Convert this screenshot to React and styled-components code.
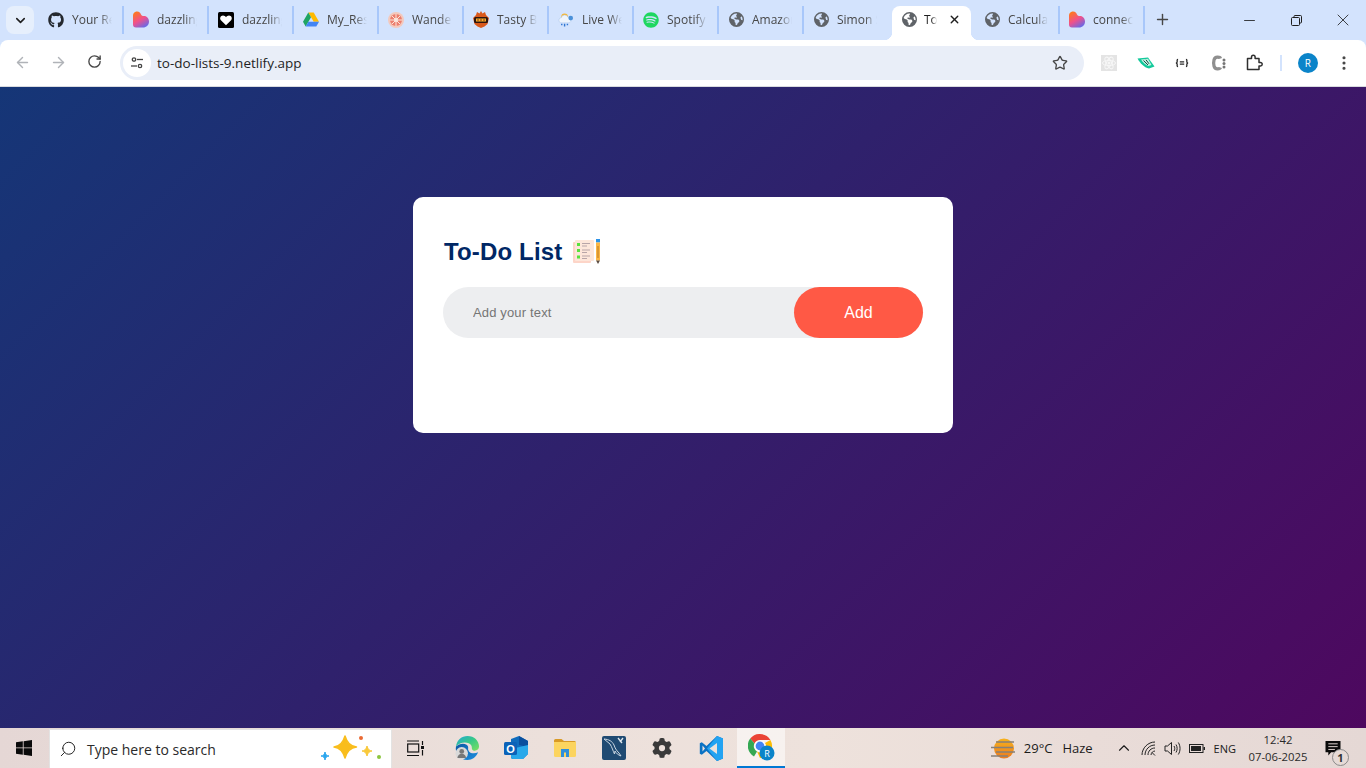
import React from 'react';
import styled, { createGlobalStyle } from 'styled-components';
import { ArrowLeft, ArrowRight, RotateCw, Star, Plus, X, Minus, ChevronDown, EllipsisVertical, ChevronUp, Search as SearchGlyph } from 'lucide-react';
import { FaGithub, FaSpotify, FaEarthAmericas, FaGear } from 'react-icons/fa6';

const Global = createGlobalStyle`
  html, body { margin: 0; padding: 0; height: 100%; overflow: hidden; }
  * { box-sizing: border-box; }
`;

const Shell = styled.div`
  width: 1366px; height: 768px; display: flex; flex-direction: column;
  font-family: "Open Sans", "Noto Sans", sans-serif; overflow: hidden;
`;

/* browser chrome */
const TabStrip = styled.div`
  height: 40px; flex: none; background: #d3e3fd; display: flex; align-items: flex-start;
  padding-left: 6px; position: relative;
`;
const TabSearch = styled.div`
  width: 28px; height: 28px; margin-top: 6px; margin-right: 5px; border-radius: 8px; background: #e6effc;
  display: flex; align-items: center; justify-content: center; color: #1f1f1f; flex: none;
`;
const Tab = styled.div`
  width: 85px; height: 28px; margin-top: 6px; display: flex; align-items: center; padding-left: 9px;
  flex: none; position: relative;
  border-right: 2px solid ${p => (p.$noSep ? 'transparent' : '#a8c7fa')};
  background-clip: padding-box;
`;
const TabTitle = styled.span`
  margin-left: 8px; font-size: 12px; line-height: 16px; margin-top: -1px; color: #474747; white-space: nowrap; overflow: hidden; width: 40px;
  -webkit-mask-image: linear-gradient(90deg, #000 70%, transparent 100%);
  mask-image: linear-gradient(90deg, #000 70%, transparent 100%);
`;
const FavSlot = styled.span`
  width: 16px; height: 16px; flex: none; display: flex; align-items: center; justify-content: center;
  margin-top: -1px;
  color: ${p => p.$color || '#5f6368'};
`;
const ActiveTab = styled.div`
  width: 79px; height: 34px; margin: 6px 4px 0 3px; padding: 0 0 6px 9px; display: flex; align-items: center;
  background: #fff; border-radius: 8px 8px 0 0; flex: none; position: relative;
  &::before, &::after {
    content: ""; position: absolute; bottom: 0; width: 8px; height: 8px;
  }
  &::before { left: -8px; background: radial-gradient(circle at 0 0, transparent 8px, #fff 8.5px); }
  &::after { right: -8px; background: radial-gradient(circle at 100% 0, transparent 8px, #fff 8.5px); }
`;
const ActiveTitle = styled.span`
  margin-left: 7px; font-size: 12px; line-height: 16px; margin-top: -1px; color: #1f1f1f; width: 13px; overflow: hidden; white-space: nowrap;
  -webkit-mask-image: linear-gradient(90deg, #000 60%, transparent 100%);
  mask-image: linear-gradient(90deg, #000 60%, transparent 100%);
`;
const TabClose = styled.span`
  margin-left: 11px; margin-top: -1px; display: flex; color: #1f1f1f;
`;
const NewTab = styled.span`
  margin: 5px 0 0 8px; width: 18px; height: 28px; display: flex; align-items: center; justify-content: center; color: #474747;
`;
const WindowControls = styled.div`
  margin-left: auto; display: flex; height: 40px;
`;
const WinButton = styled.span`
  width: 46.5px; display: flex; align-items: center; justify-content: center; color: #1f1f1f;
`;
const Toolbar = styled.div`
  height: 47px; flex: none; background: #fff; display: flex; align-items: center; padding: 0 0 1px 0;
  border-bottom: 1px solid #d9dbe0; border-radius: 8px 8px 0 0; margin-top: 0; position: relative;
`;
const ToolbarBack = styled.div`
  height: 47px; flex: none; background: #d3e3fd;
`;
const NavButton = styled.span`
  width: 36px; display: flex; justify-content: center; color: ${p => p.$color};
  flex: none;
`;
const NavGroup = styled.div`
  display: flex; padding-left: 4px; width: 120px; flex: none;
`;
const Omnibox = styled.div`
  width: 964px; height: 34px; border-radius: 17px; background: #e9eef8; display: flex; align-items: center;
  padding: 0 16px 0 3px; flex: none;
`;
const SiteInfo = styled.span`
  width: 28px; height: 28px; border-radius: 50%; background: #fff; display: flex; align-items: center; justify-content: center; flex: none;
`;
const Url = styled.span`
  margin-left: 6px; font-size: 13.5px; color: #1f1f1f;
`;
const OmniStar = styled.span`
  margin-left: auto; display: flex; color: #474747;
`;
const ExtensionTray = styled.div`
  display: flex; align-items: center; margin-left: 7px; flex: 1;
`;
const ExtSlot = styled.span`
  width: 36.4px; display: flex; justify-content: center; flex: none;
`;
const ToolbarDivider = styled.span`
  width: 2px; height: 16px; background: #d3e3fd; margin: 0 16px 0 7px; flex: none;
`;
const Avatar = styled.span`
  width: 20px; height: 20px; border-radius: 50%; background: #0b84c9; color: #fff; font-size: 10px;
  display: flex; align-items: center; justify-content: center; flex: none;
`;
const Kebab = styled.span`
  margin-left: 17px; display: flex; color: #474747;
`;

/* page */
const Page = styled.main`
  flex: 1; background: linear-gradient(135deg, #153677, #4e085f); display: flex; justify-content: center; align-items: flex-start;
  padding-top: 110px;
`;
const Card = styled.section`
  width: 540px; height: 236px; background: #fff; border-radius: 10px; padding: 40px 30px 70px;
  font-family: "Liberation Sans", Arial, sans-serif;
`;
const Heading = styled.h2`
  margin: 0 0 20px; color: #002765; font-size: 24px; font-weight: 700; display: flex; align-items: center; height: 30px;
  letter-spacing: 0.15px; padding-left: 1px;
`;
const HeadingIcon = styled.svg`
  width: 28px; height: 25px; margin: -1px 0 0 11px; flex: none;
`;
const InputRow = styled.div`
  height: 51px; display: flex; align-items: center; justify-content: space-between; background: #edeef0; border-radius: 30px;
`;
const TaskInput = styled.input`
  flex: 1; border: 0; outline: 0; background: transparent; padding: 10px 10px 10px 30px; font: 13px "Liberation Sans", Arial, sans-serif;
  letter-spacing: 0.15px; min-width: 0;
  &::placeholder { color: #757575; opacity: 1; }
`;
const AddButton = styled.button`
  width: 129px; height: 51px; border: 0; border-radius: 40px; background: #ff5945; color: #fff; font: 16px "Liberation Sans", Arial, sans-serif; flex: none;
`;

/* taskbar */
const Taskbar = styled.footer`
  height: 40px; flex: none; display: flex; align-items: stretch;
  background: linear-gradient(90deg, #e5d7d5 0%, #ece0db 40%, #eee2dc 60%, #e9dcd8 80%, #e5d8d5 100%);
`;
const StartButton = styled.span`
  width: 48px; margin-right: 1px; display: flex; align-items: center; justify-content: center; flex: none;
`;
const SearchBox = styled.div`
  width: 343px; background: #fff; margin-top: 1px; display: flex; align-items: center; padding: 0 8px 0 9px; flex: none;
  border: 1px solid #e3e3e3; border-bottom: 0; position: relative;
`;
const SearchText = styled.span`
  margin-left: 10px; font-size: 14px; color: #2a2a2a;
`;
const SparkIcon = styled.svg`
  margin-left: auto; flex: none;
`;
const TaskSlot = styled.span`
  width: 48px; margin-left: ${p => p.$offset}px; display: flex; align-items: center; justify-content: center; flex: none;
  background: ${p => (p.$active ? 'rgba(255,255,255,.55)' : 'transparent')};
  border-bottom: ${p => (p.$active ? '2px solid #0078d4' : '0')};
`;
const Tray = styled.div`
  margin-left: auto; display: flex; align-items: center; color: #1b1b1b; flex: none;
`;
const TrayText = styled.span`
  font-size: ${p => p.$size || 13}px; margin-left: ${p => p.$left || 0}px; white-space: nowrap;
`;
const TrayIcon = styled.span`
  display: flex; margin-left: ${p => p.$left}px; flex: none;
`;
const Clock = styled.span`
  width: 72px; margin-left: 6px; text-align: center; font-size: 11.3px; line-height: 17px; color: #2a2a2a; flex: none;
`;
const Notify = styled.span`
  margin: 0 25px 0 11px; position: relative; display: flex; flex: none;
`;
const NotifyBadge = styled.span`
  position: absolute; right: -8px; bottom: -10px; width: 17px; height: 17px; border-radius: 50%; border: 1px solid #8a8a8a;
  background: #e6dad6; font-size: 11px; font-weight: 700; display: flex; align-items: center; justify-content: center; color: #333;
`;

const Globe = () => <FaEarthAmericas size={15} />;

const DazzleHeart = () => (
  <svg width="17" height="17" viewBox="0 0 16 16">
    <defs>
      <linearGradient id="hg" x1="0.2" y1="0" x2="0.8" y2="1">
        <stop offset="0" stopColor="#ff7a1a" />
        <stop offset="0.5" stopColor="#f0508c" />
        <stop offset="1" stopColor="#5a6cf0" />
      </linearGradient>
    </defs>
    <path d="M0 4.500C0 1 2.500 0 4 0c2.500 0 3.500 1.500 4 3 .6 1 1.500 1.500 3 1.500 3 0 5 2.500 5 5.500 0 3.500-2.500 6-6 6H3c-2 0-3-1.200-3-3Z" fill="url(#hg)" />
  </svg>
);
const BlackHeart = () => (
  <svg width="16" height="16" viewBox="0 0 16 16">
    <rect width="16" height="16" rx="1.500" fill="#000" />
    <path d="M8 13.200 2.900 8.200C1.400 6.500 2.400 3.400 5 3.400c1.300 0 2.400.7 3 1.800.6-1.100 1.700-1.800 3-1.800 2.600 0 3.600 3.100 2.100 4.800Z" fill="#fff" />
  </svg>
);
const Drive = () => (
  <svg width="16" height="15" viewBox="0 0 16 14">
    <path d="M5.300 0h5.400l5.300 9.200h-5.300Z" fill="#ffba00" />
    <path d="M5.300 0 0 9.200 2.700 14 8 4.700Z" fill="#1fa463" />
    <path d="M5.300 9.200H16L13.300 14H2.700Z" fill="#4285f4" />
  </svg>
);
const Wander = () => (
  <svg width="16" height="16" viewBox="0 0 16 16">
    <circle cx="8" cy="8" r="8" fill="#f3c9bd" />
    <circle cx="8" cy="8" r="6" fill="#ec7f6e" />
    <path d="M2 8h12M8 2v12M4 4l8 8M12 4l-8 8" stroke="#fbe6dc" strokeWidth="1" />
    <circle cx="8" cy="8" r="2" fill="#fbe6dc" />
  </svg>
);
const Tasty = () => (
  <svg width="16" height="17" viewBox="0 0 16 17">
    <path d="M8 0l1.500 2.500L12 1l1 3 3 3-1.500 6-3 2.500L8 17l-3.500-1.500-3-2.500L0 7l3-3 1-3 2.500 1.500Z" fill="#d9591c" />
    <rect x="1" y="6" width="14" height="6" rx="1.500" fill="#2e1510" />
    <rect x="3" y="7.500" width="10" height="3" fill="#f7b32b" />
    <path d="M5 8v2M8 8v2M11 8v2" stroke="#8a2f12" strokeWidth="1" />
  </svg>
);
const Weather = () => (
  <svg width="17" height="16" viewBox="0 0 17 16">
    <circle cx="7" cy="4.500" r="3.500" fill="#f7b733" />
    <path d="M3 11a2.800 2.800 0 0 1 .5-5.500 3.700 3.700 0 0 1 7-.5 3 3 0 0 1 1 6Z" fill="#eef4fc" stroke="#a9c6ea" strokeWidth=".5" />
    <circle cx="13.500" cy="6" r="2.500" fill="#4a90d9" />
    <path d="M4 12v1.500M7 12v3M10 12v1.500" stroke="#2f76d2" strokeWidth="1.500" />
  </svg>
);
const tabs = [
  ['Your Repositories', <FavSlot $color="#24292f"><FaGithub size={16} /></FavSlot>],
  ['dazzling-site', <FavSlot><DazzleHeart /></FavSlot>],
  ['dazzling-app', <FavSlot><BlackHeart /></FavSlot>],
  ['My_Resume', <FavSlot><Drive /></FavSlot>],
  ['Wanderlust', <FavSlot><Wander /></FavSlot>],
  ['Tasty Bites', <FavSlot><Tasty /></FavSlot>],
  ['Live Weather', <FavSlot><Weather /></FavSlot>],
  ['Spotify', <FavSlot $color="#1ed760"><FaSpotify size={16} /></FavSlot>],
  ['Amazon', <FavSlot><Globe /></FavSlot>],
  ['Simon Says', <FavSlot><Globe /></FavSlot>],
];

const TuneIcon = () => (
  <svg width="16" height="16" viewBox="0 0 16 16" fill="none" stroke="#444" strokeWidth="1.300">
    <circle cx="5" cy="4.500" r="1.700" /><path d="M8 4.500h6" />
    <circle cx="11" cy="11" r="1.700" /><path d="M2 11h6" />
  </svg>
);
const ReactExt = () => (
  <svg width="16" height="16" viewBox="0 0 16 16">
    <rect width="16" height="16" fill="#e4e4e4" />
    <g fill="none" stroke="#f7f7f7" strokeWidth="1">
      <ellipse cx="8" cy="8" rx="6.500" ry="2.600" />
      <ellipse cx="8" cy="8" rx="6.500" ry="2.600" transform="rotate(60 8 8)" />
      <ellipse cx="8" cy="8" rx="6.500" ry="2.600" transform="rotate(120 8 8)" />
    </g>
    <circle cx="8" cy="8" r="1.500" fill="#f7f7f7" />
  </svg>
);
const SaucerExt = () => (
  <svg width="18" height="12" viewBox="0 0 18 12">
    <path d="M.5 1.500 11 .5 17.500 9.500 12 11.500C7 10.500 3 6 .5 1.500Z" fill="#12c99b" />
    <path d="M4 2.500l7-.8 3.500 6.300-3 1C8.500 8 6 5.500 4 2.500Z" fill="#bff3e2" />
    <path d="M6.500 3.500 11 8M9 2.800l3 4" stroke="#1a4a45" strokeWidth="1" />
  </svg>
);
const BraceExt = () => (
  <svg width="14" height="10" viewBox="0 0 16 10" fill="none" stroke="#2b2b2b" strokeWidth="1.500">
    <path d="M3.500 1C2 1 2.500 2.500 2.500 3.500S2 5 1 5c1 0 1.500.5 1.500 1.500S2 9 3.500 9" />
    <path d="M12.500 1c1.500 0 1 1.500 1 2.500s.5 1.500 1.500 1.500c-1 0-1.500.5-1.500 1.500s.5 2.500-1 2.500" />
    <path d="M5.500 3.800h5M5.500 6.200h5" />
  </svg>
);
const CExt = () => (
  <svg width="15" height="16" viewBox="0 0 15 16">
    <path d="M9.500 3.500C9 2 4 1 3 5c-.5 2-.5 4 0 6 1 4 6 3 6.500 1.500" fill="none" stroke="#8f8f8f" strokeWidth="3.200" />
    <circle cx="13" cy="5" r="1.500" fill="#757575" /><circle cx="13" cy="8.500" r="1.500" fill="#757575" /><circle cx="13" cy="12" r="1.500" fill="#757575" />
  </svg>
);
const PuzzleExt = () => (
  <svg width="17" height="17" viewBox="0 0 17 17" fill="none" stroke="#2f2f2f" strokeWidth="1.500" strokeLinejoin="round">
    <path d="M1.500 4.500h4V3a1.800 1.800 0 0 1 3.600 0v1.500H13v4h1.500a1.700 1.700 0 0 1 0 3.400H13v3.600H1.500Z" />
  </svg>
);
const WindowsLogo = () => (
  <svg width="16" height="16" viewBox="0 0 16 16" fill="#0a0a0a">
    <path d="M0 2.300 6.800 1.300V7.500H0ZM7.600 1.200 16 0V7.500H7.600ZM0 8.300H6.800V14.700L0 13.700ZM7.600 8.300H16V16L7.600 14.800Z" />
  </svg>
);
const Sparkles = () => (
  <SparkIcon width="64" height="30" viewBox="0 0 64 30">
    <path d="M2 22c2.500-.2 3.300-1 4-4 .7 3 1.500 3.800 4 4-2.500.3-3.300 1.200-4 4-.7-2.800-1.500-3.700-4-4Z" fill="#2aa6ee" stroke="#2aa6ee" strokeWidth="1" />
    <path d="M15 13c6-.5 9-4 11-11 2 7 5 10.500 11.500 11-6.500.7-9.500 4-11.500 11-2-7-5-10.300-11-11Z" fill="#f9bd1c" stroke="#f9bd1c" strokeWidth="1.500" strokeLinejoin="round" />
    <path d="M43 17c2.500-.2 4-1.500 5-5 1 3.500 2.500 4.800 5 5-2.500.3-4 1.500-5 5-1-3.500-2.500-4.700-5-5Z" fill="#f9c93a" stroke="#f9c93a" />
    <circle cx="42" cy="4" r="2" fill="#ea6a33" />
    <circle cx="60" cy="23" r="2" fill="#8cc63f" />
  </SparkIcon>
);
const TaskView = () => (
  <svg width="18" height="17" viewBox="0 0 18 17" fill="none" stroke="#111" strokeWidth="1.200">
    <rect x=".7" y="4" width="11" height="8" />
    <path d="M0 1h12M0 15.500h12M15.500 1v4M15.500 10v5.500" />
    <rect x="14" y="6" width="3" height="3" fill="#111" stroke="none" />
  </svg>
);
const Edge = () => (
  <svg width="25" height="25" viewBox="0 0 26 26">
    <defs>
      <linearGradient id="eg" x1="0" y1="0" x2="1" y2="1">
        <stop offset="0" stopColor="#1fa8d8" /><stop offset=".5" stopColor="#39c985" /><stop offset="1" stopColor="#7fe05f" />
      </linearGradient>
      <linearGradient id="eb" x1="0" y1="0" x2="1" y2="1">
        <stop offset="0" stopColor="#0c59a4" /><stop offset="1" stopColor="#1d8fe0" />
      </linearGradient>
    </defs>
    <path d="M1 11C2 4 7 0 13 0c7 0 12 5 12 11 0 3-3 5-6 4-2-.5-1-3-2-5C15 6 6 5 1 11Z" fill="url(#eg)" />
    <path d="M1 11c3-3 8-4 11-2 3 2 1 4 2 6 1 3 6 4 10 2-2 5-6 8-11 8-4 0-8-2-10-5C1 17 .5 14 1 11Z" fill="url(#eb)" />
    <circle cx="7" cy="18" r="6.500" fill="#d9d9d9" />
    <circle cx="7" cy="16" r="2.500" fill="#777" />
    <path d="M2.500 23a4.500 4.500 0 0 1 9 0Z" fill="#777" />
  </svg>
);
const Outlook = () => (
  <svg width="25" height="24" viewBox="0 0 25 24">
    <path d="M7 3 15 0l9 5v13l-5 5H9a2 2 0 0 1-2-2Z" fill="#0f6cbd" />
    <path d="M15 0l9 5v6l-9-2Z" fill="#0a4f9e" />
    <path d="M7 13l17-4v9l-5 5H9a2 2 0 0 1-2-2Z" fill="#28a8ea" />
    <rect x="0" y="6" width="13" height="13" rx="1.500" fill="#0b62b8" />
    <text x="6.500" y="16.500" textAnchor="middle" fontSize="11" fontWeight="700" fill="#fff" fontFamily="Liberation Sans">O</text>
  </svg>
);
const Explorer = () => (
  <svg width="22" height="18" viewBox="0 0 22 18">
    <path d="M0 1.500A1.500 1.500 0 0 1 1.500 0h6L10 2h10.500A1.500 1.500 0 0 1 22 3.500V6H0Z" fill="#d99a26" />
    <path d="M0 3h22v13.500a1.500 1.500 0 0 1-1.500 1.500h-19A1.500 1.500 0 0 1 0 16.500Z" fill="#fcd45f" />
    <path d="M7 10h8v8h-3v-4.500h-2V18H7Z" fill="#2f8fdb" />
  </svg>
);
const MySql = () => (
  <svg width="24" height="24" viewBox="0 0 24 24">
    <rect width="24" height="24" rx="2" fill="#1f4a72" />
    <path d="M2 3c5 .5 8 2 10 6 1 3 2 5 5 8l2 3c-3-1-5-3-6-5l-.5 3C11 15 10 11 8 8 6 6 4 5 2 3Z" fill="none" stroke="#c9d6e2" strokeWidth="1" />
    <path d="M16 2l4 5M21 2l-3 4" stroke="#dfe8ef" strokeWidth="1.300" />
  </svg>
);
const VsCode = () => (
  <svg width="25" height="25" viewBox="0 0 25 25">
    <path d="M18 0 7.500 10 2.800 6.300.8 7.300v10.400l2 1 4.700-3.700L18 25l6-2.600V2.600Z" fill="#0a72c4" />
    <path d="M18 0l6 2.600v19.800L18 25 8 12.500Z" fill="#23a3f2" />
    <path d="M18 7 10.500 12.500 18 18Z" fill="#eee2dc" />
    <path d="M3.500 9.400 6 12.500l-2.500 3.100Z" fill="#eee2dc" />
  </svg>
);
const ChromeBadge = () => (
  <svg width="27" height="27" viewBox="0 0 27 27">
    <path d="M12 0a12 12 0 0 1 10.400 6H12a6 6 0 0 0-5.500 3.500L2.200 4.600A12 12 0 0 1 12 0Z" fill="#ea4335" />
    <path d="M2.200 4.600 6.500 9.500A6 6 0 0 0 9 17.500L6 22.400A12 12 0 0 1 2.200 4.600Z" fill="#34a853" />
    <path d="M22.400 6A12 12 0 0 1 12 24l-3-6.500A6 6 0 0 0 17 9Z" fill="#fbbc04" />
    <circle cx="12" cy="12" r="5" fill="#4285f4" stroke="#fff" strokeWidth="1.200" />
    <circle cx="19" cy="19" r="7.500" fill="#0b84c9" />
    <text x="19" y="22.500" textAnchor="middle" fontSize="9" fill="#fff" fontFamily="Open Sans">R</text>
  </svg>
);
const Haze = () => (
  <svg width="26" height="21" viewBox="0 0 26 21">
    <defs>
      <linearGradient id="hz" x1="0" y1="0" x2="0" y2="1">
        <stop offset="0" stopColor="#f7b21c" /><stop offset="1" stopColor="#ec7a1f" />
      </linearGradient>
    </defs>
    <circle cx="13" cy="10.500" r="10" fill="url(#hz)" />
    <path d="M5 4h18M0 9.500h22M5 14h19M0 18h17" stroke="#85807a" strokeWidth="1.600" />
  </svg>
);
const Wifi = () => (
  <svg width="15" height="15" viewBox="0 0 15 15" fill="none" stroke="#222" strokeWidth="1">
    <path d="M1 14C1 7 7 1 14 1M4 14c0-5.500 4.500-10 10-10M7 14c0-4 3-7 7-7" />
    <path d="M10 14c0-2 2-4 4-4" />
    <path d="M11 11.500l3 3" stroke="#222" strokeWidth="1" />
  </svg>
);
const Speaker = () => (
  <svg width="17" height="15" viewBox="0 0 17 15" fill="none" stroke="#222" strokeWidth="1">
    <path d="M1 5h2.500L7.500 1.500v12L3.500 10H1Z" />
    <path d="M10 5c1 1.500 1 3.500 0 5M12 3.500c1.500 2.500 1.500 5.500 0 8M14.300 1.500c2.300 3.500 2.300 8.500 0 12" />
  </svg>
);
const Battery = () => (
  <svg width="16" height="9" viewBox="0 0 16 9">
    <rect x=".5" y=".5" width="13.500" height="8" fill="none" stroke="#222" />
    <rect x="2" y="2" width="10" height="5" fill="#222" />
    <rect x="14.500" y="3" width="1.500" height="3" fill="#222" />
  </svg>
);
const ChatBubble = () => (
  <svg width="16" height="15" viewBox="0 0 16 16">
    <path d="M0 0h16v12H6l-3 3.500V12H0Z" fill="#0a0a0a" />
    <path d="M3 3h10M3 6h10M3 9h7" stroke="#e6dad6" strokeWidth="1" />
  </svg>
);
const NotebookEmoji = () => (
  <HeadingIcon viewBox="0 0 28 25">
    <rect x="0" y="3" width="18" height="21" rx="1" fill="#fdd5c8" />
    <rect x="2" y="1" width="19" height="21" rx="1" fill="#fde6da" />
    <rect x="4" y="4" width="3" height="3" fill="#58e23c" />
    <rect x="4" y="10" width="3" height="3" fill="#58e23c" />
    <rect x="4" y="16.500" width="3" height="3" fill="#58e23c" />
    <path d="M9 4.500h8M9 7h5M9 11h8M9 13.500h5M9 17h8M9 19.500h5" stroke="#b8a5a8" strokeWidth="1" />
    <rect x="23" y="0" width="4" height="3.500" fill="#2d93e8" />
    <rect x="23" y="3.500" width="4" height="18" fill="#fbb544" />
    <rect x="24.500" y="7" width="1" height="12" fill="#b97a20" />
    <path d="M23 21.500h4L25 25Z" fill="#5a4a40" />
  </HeadingIcon>
);

export default function App() {
  return (
    <Shell>
      <Global />
      <TabStrip>
        <TabSearch><ChevronDown size={15} strokeWidth={2.500} /></TabSearch>
        {tabs.map(([title, icon], i) => (
          <Tab key={title} $noSep={i === 9}>{icon}<TabTitle>{title}</TabTitle></Tab>
        ))}
        <ActiveTab>
          <FavSlot><Globe /></FavSlot>
          <ActiveTitle>To-Do List</ActiveTitle>
          <TabClose><X size={13} strokeWidth={2.500} /></TabClose>
        </ActiveTab>
        <Tab><FavSlot><Globe /></FavSlot><TabTitle>Calculator</TabTitle></Tab>
        <Tab><FavSlot><DazzleHeart /></FavSlot><TabTitle>connect</TabTitle></Tab>
        <NewTab><Plus size={17} strokeWidth={2} /></NewTab>
        <WindowControls>
          <WinButton><Minus size={17} strokeWidth={1.200} /></WinButton>
          <WinButton>
            <svg width="11" height="11" viewBox="0 0 11 11" fill="none" stroke="#1f1f1f" strokeWidth="1">
              <rect x=".5" y="2.500" width="8" height="8" rx="1" /><path d="M3 2.500V1.500a1 1 0 0 1 1-1h5.500a1 1 0 0 1 1 1V7a1 1 0 0 1-1 1h-1" />
            </svg>
          </WinButton>
          <WinButton><X size={20} strokeWidth={1} /></WinButton>
        </WindowControls>
      </TabStrip>
      <ToolbarBack>
        <Toolbar>
          <NavGroup>
            <NavButton $color="#b0b3b8"><ArrowLeft size={17} /></NavButton>
            <NavButton $color="#b0b3b8"><ArrowRight size={17} /></NavButton>
            <NavButton $color="#474747"><RotateCw size={15} strokeWidth={2.200} /></NavButton>
          </NavGroup>
          <Omnibox>
            <SiteInfo><TuneIcon /></SiteInfo>
            <Url>to-do-lists-9.netlify.app</Url>
            <OmniStar><Star size={16} strokeWidth={2} /></OmniStar>
          </Omnibox>
          <ExtensionTray>
            <ExtSlot><ReactExt /></ExtSlot>
            <ExtSlot><SaucerExt /></ExtSlot>
            <ExtSlot><BraceExt /></ExtSlot>
            <ExtSlot><CExt /></ExtSlot>
            <ExtSlot><PuzzleExt /></ExtSlot>
            <ToolbarDivider />
            <Avatar>R</Avatar>
            <Kebab><EllipsisVertical size={18} strokeWidth={2.200} /></Kebab>
          </ExtensionTray>
        </Toolbar>
      </ToolbarBack>
      <Page>
        <Card>
          <Heading>To-Do List<NotebookEmoji /></Heading>
          <InputRow>
            <TaskInput placeholder="Add your text" />
            <AddButton>Add</AddButton>
          </InputRow>
        </Card>
      </Page>
      <Taskbar>
        <StartButton><WindowsLogo /></StartButton>
        <SearchBox>
          <SearchGlyph size={18} strokeWidth={1.300} color="#222" style={{ transform: 'scaleX(-1)' }} />
          <SearchText>Type here to search</SearchText>
          <Sparkles />
        </SearchBox>
        <TaskSlot $offset={0}><TaskView /></TaskSlot>
        <TaskSlot $offset={3}><Edge /></TaskSlot>
        <TaskSlot $offset={1}><Outlook /></TaskSlot>
        <TaskSlot $offset={1}><Explorer /></TaskSlot>
        <TaskSlot $offset={1}><MySql /></TaskSlot>
        <TaskSlot $offset={0}><FaGear size={20} color="#3a3a3a" /></TaskSlot>
        <TaskSlot $offset={1}><VsCode /></TaskSlot>
        <TaskSlot $offset={2} $active><ChromeBadge /></TaskSlot>
        <Tray>
          <Haze />
          <TrayText $left={7}>29°C</TrayText>
          <TrayText $left={10}>Haze</TrayText>
          <TrayIcon $left={22}><ChevronUp size={18} strokeWidth={1.500} /></TrayIcon>
          <TrayIcon $left={8}><Wifi /></TrayIcon>
          <TrayIcon $left={8}><Speaker /></TrayIcon>
          <TrayIcon $left={8}><Battery /></TrayIcon>
          <TrayText $size={11} $left={9}>ENG</TrayText>
          <Clock>12:42<br />07-06-2025</Clock>
          <Notify><ChatBubble /><NotifyBadge>1</NotifyBadge></Notify>
        </Tray>
      </Taskbar>
    </Shell>
  );
}
